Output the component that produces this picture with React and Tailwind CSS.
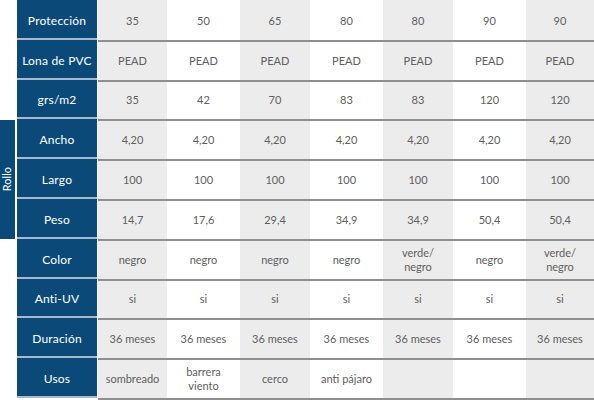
const cols = ['w-[69px]', 'w-[73px]', 'w-[70px]', 'w-[73px]', 'w-[70px]', 'w-[73px]', 'w-[68px]']

const rows = [
  ['Protección', ['35', '50', '65', '80', '80', '90', '90']],
  ['Lona de PVC', ['PEAD', 'PEAD', 'PEAD', 'PEAD', 'PEAD', 'PEAD', 'PEAD']],
  ['grs/m2', ['35', '42', '70', '83', '83', '120', '120']],
  ['Ancho', ['4,20', '4,20', '4,20', '4,20', '4,20', '4,20', '4,20']],
  ['Largo', ['100', '100', '100', '100', '100', '100', '100']],
  ['Peso', ['14,7', '17,6', '29,4', '34,9', '34,9', '50,4', '50,4']],
  ['Color', ['negro', 'negro', 'negro', 'negro', 'verde/\nnegro', 'negro', 'verde/\nnegro']],
  ['Anti-UV', ['si', 'si', 'si', 'si', 'si', 'si', 'si']],
  ['Duración', ['36 meses', '36 meses', '36 meses', '36 meses', '36 meses', '36 meses', '36 meses']],
  ['Usos', ['sombreado', 'barrera\nviento', 'cerco', 'anti pájaro', '', '', '']],
]

function Row({ label, values, first }) {
  return (
    <div className="flex h-[40px]">
      <div className="w-[81px] pr-px">
        <div className="h-full bg-[#0b4a78] border-b-2 border-[#a7bbce] flex items-center justify-center pt-[4px] text-white text-[12px] tracking-[0.2px]">
          {label}
        </div>
      </div>
      {values.map((v, i) => (
        <div
          key={i}
          className={`${cols[i]} ${i % 2 === 0 ? 'bg-[#ececec]' : 'bg-white'} border-t-2 ${first ? 'border-transparent' : 'border-[#8f8f8f]'} flex items-center justify-center text-center text-[11px] leading-[14px] text-[#606060] whitespace-pre-line`}
        >
          {v}
        </div>
      ))}
    </div>
  )
}

export default function App() {
  return (
    <div className="w-[594px] h-[400px] bg-white flex font-['Lato',sans-serif] overflow-hidden">
      <div className="w-[17px] flex flex-col">
        <div className="h-[120px]" />
        <div className="w-[15px] h-[119px] bg-[#0b4a78] flex items-center justify-center">
          <span className="text-white text-[11px] [writing-mode:vertical-rl] rotate-180">Rollo</span>
        </div>
      </div>
      <div className="flex flex-col">
        {rows.map(([label, values], i) => (
          <Row key={label} label={label} values={values} first={i === 0} />
        ))}
        <div className="h-[2px] bg-[#8f8f8f] ml-[81px]" />
      </div>
    </div>
  )
}
